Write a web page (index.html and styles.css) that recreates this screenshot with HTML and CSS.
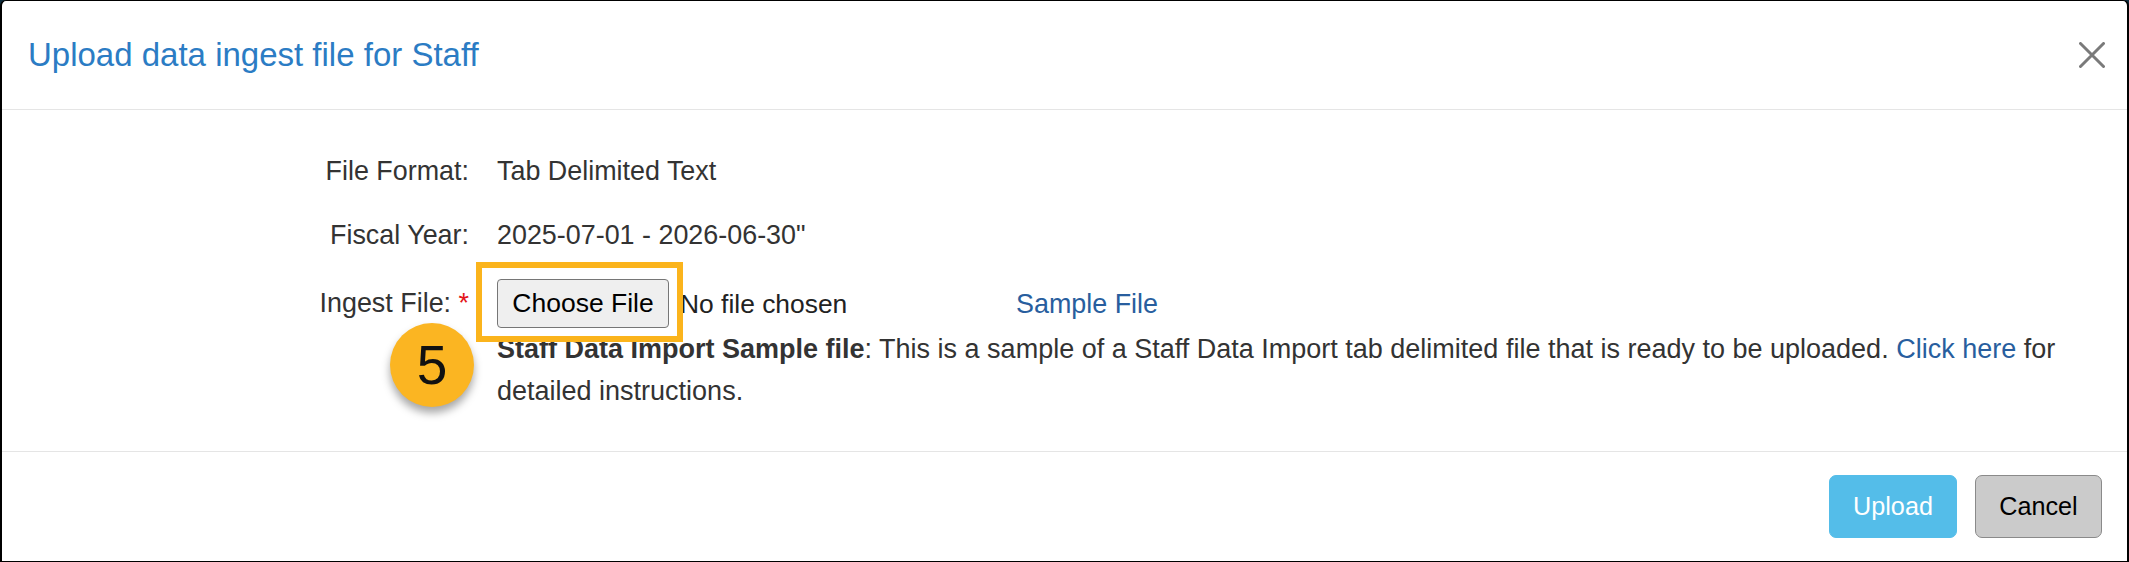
FILE: index.html
```html
<!DOCTYPE html>
<html lang="en">
<head>
<meta charset="utf-8">
<title>Upload data ingest file for Staff</title>
<link rel="stylesheet" href="styles.css">
</head>
<body>
<div class="modal">
  <div class="modal-header">
    <h4 class="modal-title">Upload data ingest file for Staff</h4>
    <button class="close" type="button" aria-label="Close">
      <svg width="26" height="26" viewBox="0 0 26 26"><path d="M1.5 1.5 L24.5 24.5 M24.5 1.5 L1.5 24.5" stroke="#7a7a7a" stroke-width="3" stroke-linecap="round" fill="none"/></svg>
    </button>
  </div>
  <div class="modal-body">
    <div class="form-row">
      <div class="form-label">File Format:</div>
      <div class="form-value">Tab Delimited Text</div>
    </div>
    <div class="form-row">
      <div class="form-label">Fiscal Year:</div>
      <div class="form-value">2025-07-01 - 2026-06-30"</div>
    </div>
    <div class="form-row form-row-file">
      <div class="form-label form-label-file">Ingest File: <span class="required">*</span></div>
      <div class="form-value">
        <div class="file-line">
          <div class="file-input">
            <span class="file-btn-wrap">
              <button class="file-btn" type="button">Choose File</button>
              <span class="highlight"></span>
              <span class="step-badge">5</span>
            </span>
            <span class="file-status">No file chosen</span>
          </div>
          <a class="link" href="#">Sample File</a>
        </div>
        <p class="desc"><strong>Staff Data Import Sample file</strong>: This is a sample of a Staff Data Import tab delimited file that is ready to be uploaded. <a class="link" href="#">Click here</a> for detailed instructions.</p>
      </div>
    </div>
  </div>
  <div class="modal-footer">
    <button class="btn btn-upload" type="button">Upload</button>
    <button class="btn btn-cancel" type="button">Cancel</button>
  </div>
</div>
</body>
</html>
```
FILE: styles.css
```css
* { box-sizing: border-box; }
html, body {
  margin: 0;
  padding: 0;
  background: #0d2b3c;
}
body {
  width: 2129px;
  height: 562px;
  font-family: "Liberation Sans", Arial, sans-serif;
  color: #333333;
}
.modal {
  width: 2129px;
  height: 562px;
  background: #ffffff;
  border: 1px solid #000000;
  border-left-width: 2px;
  border-right-width: 2px;
  border-radius: 6px 6px 0 0;
  display: flex;
  flex-direction: column;
}
.modal-header {
  height: 109px;
  border-bottom: 1px solid #e5e5e5;
  padding: 0 22px 0 26px;
  display: flex;
  align-items: center;
  justify-content: space-between;
}
.modal-title {
  margin: 0;
  font-size: 33px;
  font-weight: normal;
  line-height: 1.1;
  color: #2b7cc4;
}
.close {
  border: 0;
  background: transparent;
  padding: 0;
  width: 26px;
  height: 26px;
  display: flex;
}
.modal-body {
  padding: 41px 29px 37px 27px;
  font-size: 26.9px;
}
.form-row {
  display: grid;
  grid-template-columns: 440px 1fr;
  column-gap: 28px;
  line-height: 40px;
  margin-bottom: 24px;
}
.form-row-file {
  margin-top: 1px;
  margin-bottom: 0;
}
.form-label {
  text-align: right;
}
.form-label-file {
  line-height: 49px;
}
.required {
  color: #e3141b;
}
.file-line {
  display: flex;
  align-items: center;
  height: 49px;
}
.file-input {
  width: 519px;
  display: flex;
  align-items: center;
}
.file-btn-wrap {
  position: relative;
  display: inline-flex;
}
.file-btn {
  width: 172px;
  height: 49px;
  border: 1px solid #767676;
  border-radius: 4px;
  background: #efefef;
  color: #000000;
  font-family: "Liberation Sans", Arial, sans-serif;
  font-size: 26.5px;
  padding: 0;
}
.highlight {
  position: absolute;
  left: -21px;
  top: -17px;
  width: 207px;
  height: 80px;
  border: 6px solid #fbb41c;
  z-index: 2;
}
.step-badge {
  position: absolute;
  left: -107px;
  top: 44px;
  width: 84px;
  height: 84px;
  border-radius: 50%;
  background: #fbb522;
  color: #111111;
  font-size: 55px;
  line-height: 84px;
  text-align: center;
  box-shadow: 0 6px 8px rgba(0, 0, 0, 0.35);
  z-index: 3;
}
.file-status {
  margin-left: 11px;
  font-size: 26.4px;
  color: #222222;
}
.link {
  color: #285e9e;
  text-decoration: none;
}
.desc {
  margin: 0;
  line-height: 42px;
  font-size: 27px;
}
.desc strong {
  color: #333333;
}
.modal-footer {
  margin-top: auto;
  border-top: 1px solid #e5e5e5;
  padding: 23px 25px 23px 0;
  display: flex;
  justify-content: flex-end;
  gap: 18px;
}
.btn {
  height: 63px;
  border-radius: 7px;
  font-family: "Liberation Sans", Arial, sans-serif;
  font-size: 25.2px;
  padding: 0;
}
.btn-upload {
  width: 128px;
  background: #54bde9;
  border: 1px solid #54bde9;
  color: #ffffff;
}
.btn-cancel {
  width: 127px;
  background: #cbcbcb;
  border: 1px solid #8a8a8a;
  color: #000000;
}
```
